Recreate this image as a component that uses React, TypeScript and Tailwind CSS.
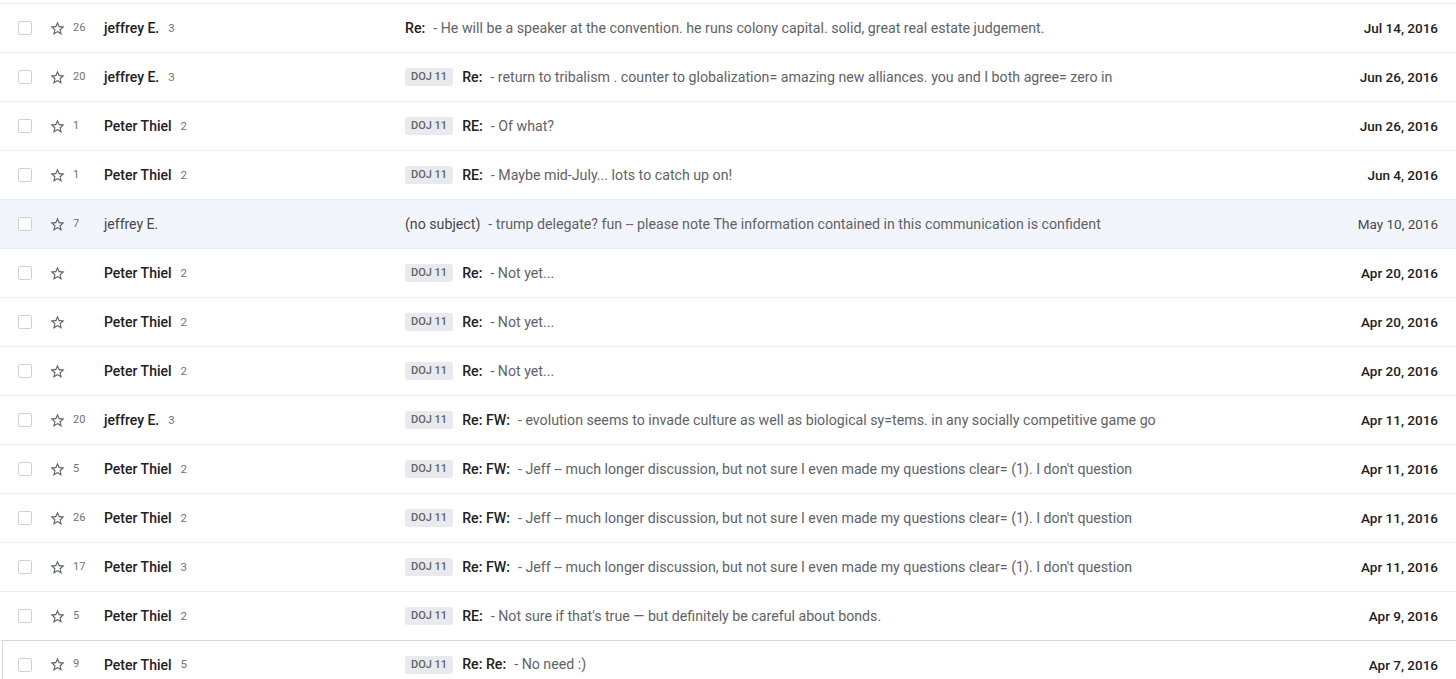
import React from 'react';

type Mail = {
  count?: string;
  sender: string;
  threads?: string;
  label?: boolean;
  prefix: string;
  snippet: string;
  date: string;
  read?: boolean;
};

const mails: Mail[] = [
  { count: '26', sender: 'jeffrey E.', threads: '3', prefix: 'Re:', snippet: '- He will be a speaker at the convention. he runs colony capital. solid, great real estate judgement.', date: 'Jul 14, 2016' },
  { count: '20', sender: 'jeffrey E.', threads: '3', label: true, prefix: 'Re:', snippet: '- return to tribalism . counter to globalization= amazing new alliances. you and I both agree= zero in', date: 'Jun 26, 2016' },
  { count: '1', sender: 'Peter Thiel', threads: '2', label: true, prefix: 'RE:', snippet: '- Of what?', date: 'Jun 26, 2016' },
  { count: '1', sender: 'Peter Thiel', threads: '2', label: true, prefix: 'RE:', snippet: '- Maybe mid-July... lots to catch up on!', date: 'Jun 4, 2016' },
  { count: '7', sender: 'jeffrey E.', prefix: '(no subject)', snippet: '- trump delegate? fun -- please note The information contained in this communication is confident', date: 'May 10, 2016', read: true },
  { sender: 'Peter Thiel', threads: '2', label: true, prefix: 'Re:', snippet: '- Not yet...', date: 'Apr 20, 2016' },
  { sender: 'Peter Thiel', threads: '2', label: true, prefix: 'Re:', snippet: '- Not yet...', date: 'Apr 20, 2016' },
  { sender: 'Peter Thiel', threads: '2', label: true, prefix: 'Re:', snippet: '- Not yet...', date: 'Apr 20, 2016' },
  { count: '20', sender: 'jeffrey E.', threads: '3', label: true, prefix: 'Re: FW:', snippet: '- evolution seems to invade culture as well as biological sy=tems. in any socially competitive game go', date: 'Apr 11, 2016' },
  { count: '5', sender: 'Peter Thiel', threads: '2', label: true, prefix: 'Re: FW:', snippet: "- Jeff -- much longer discussion, but not sure I even made my questions clear= (1). I don't question", date: 'Apr 11, 2016' },
  { count: '26', sender: 'Peter Thiel', threads: '2', label: true, prefix: 'Re: FW:', snippet: "- Jeff -- much longer discussion, but not sure I even made my questions clear= (1). I don't question", date: 'Apr 11, 2016' },
  { count: '17', sender: 'Peter Thiel', threads: '3', label: true, prefix: 'Re: FW:', snippet: "- Jeff -- much longer discussion, but not sure I even made my questions clear= (1). I don't question", date: 'Apr 11, 2016' },
  { count: '5', sender: 'Peter Thiel', threads: '2', label: true, prefix: 'RE:', snippet: "- Not sure if that's true \u2014 but definitely be careful about bonds.", date: 'Apr 9, 2016' },
  { count: '9', sender: 'Peter Thiel', threads: '5', label: true, prefix: 'Re: Re:', snippet: '- No need :)', date: 'Apr 7, 2016' },
];

const StarOutline = () => (
  <svg width="17" height="17" viewBox="0 0 24 24" fill="#5f6368">
    <path d="M22 9.24l-7.19-.62L12 2 9.19 8.63 2 9.24l5.46 4.73L5.82 21 12 17.27 18.18 21l-1.63-7.03L22 9.24zM12 15.4l-3.76 2.27 1-4.28-3.32-2.88 4.38-.38L12 6.1l1.71 4.04 4.38.38-3.32 2.88 1 4.28L12 15.4z" />
  </svg>
);

const MailRow = ({ mail, last }: { mail: Mail; last: boolean }) => {
  const strong = mail.read ? 'font-normal text-[#45484c]' : 'font-medium text-[#202124]';
  return (
    <div
      className={`flex items-center h-[49px] border-b border-[#eceef1] ${
        mail.read ? 'bg-[#f2f6fc]' : 'bg-white'
      } ${last ? 'border-l border-t border-l-[#d4d6d9] border-t-[#d4d6d9] ml-[2px] -mt-px' : ''}`}
    >
      <div className={`flex items-center shrink-0 ${last ? 'w-[101px] pl-[15px]' : 'w-[104px] pl-[18px]'}`}>
        <div className="w-[14px] h-[14px] border border-[#cfd1d4] rounded-[2px] bg-white" />
        <div className="ml-[17px] flex items-center">
          <StarOutline />
        </div>
        <span className="ml-[7px] text-[11px] text-[#6f7378]">{mail.count}</span>
      </div>
      <div className="w-[301px] shrink-0 flex items-center text-[14px] pt-px">
        <span className={strong}>{mail.sender}</span>
        {mail.threads && <span className="ml-[9px] text-[11.5px] text-[#6f7378]">{mail.threads}</span>}
      </div>
      <div className="flex-1 flex items-center text-[14.2px] min-w-0 whitespace-nowrap pt-px">
        {mail.label && (
          <span className="mr-[9px] h-[18px] px-[6px] rounded-[3px] bg-[#e8eaed] text-[11px] text-[#5f6368] font-medium flex items-center">
            DOJ 11
          </span>
        )}
        <span className={strong}>{mail.prefix}</span>
        <span className="ml-[8px] text-[#5f6368]">{mail.snippet}</span>
      </div>
      <div className={`pr-[18px] text-[13.5px] pt-px ${strong}`}>{mail.date}</div>
    </div>
  );
};

export default function App() {
  return (
    <div className="w-[1456px] h-[679px] overflow-hidden bg-white" style={{ fontFamily: 'Roboto, "Liberation Sans", sans-serif' }}>
      <div className="mt-[3px] border-t border-[#eceef1]">
        {mails.map((m, i) => (
          <MailRow key={i} mail={m} last={i === mails.length - 1} />
        ))}
      </div>
    </div>
  );
}
